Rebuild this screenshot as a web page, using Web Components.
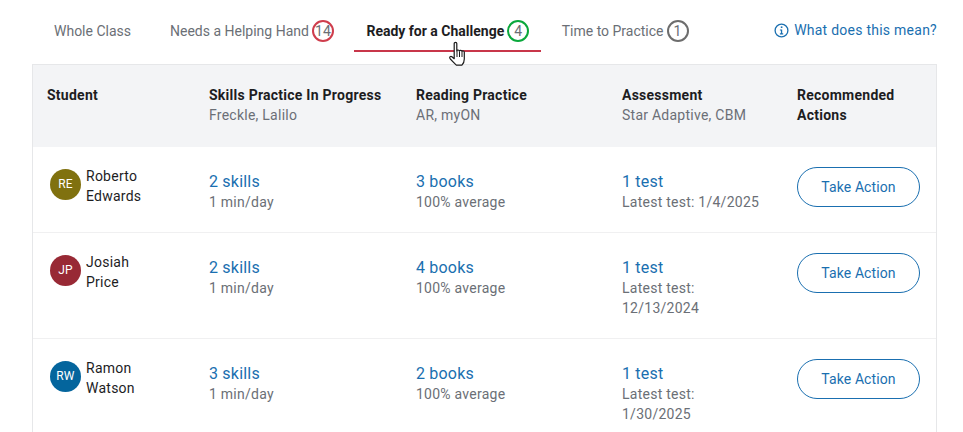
<!DOCTYPE html>
<html>
<head>
<meta charset="utf-8">
<title>Recommendations</title>
<style>
    html, body {
        margin: 0;
        padding: 0;
        height: 432px;
        overflow: hidden;
        background: #fff;
        font-family: Roboto, sans-serif;
    }
</style>
</head>
<body>
<group-view>
    <tab-bar slot="tabs">
        <tab-item>Whole Class</tab-item>
        <tab-item count="14" tone="red">Needs a Helping Hand</tab-item>
        <tab-item count="4" tone="green" active>Ready for a Challenge</tab-item>
        <tab-item count="1" tone="grey">Time to Practice</tab-item>
        <help-link slot="end">What does this mean?</help-link>
    </tab-bar>
    <student-table slot="table">
        <table-head></table-head>
        <student-row name="Roberto|Edwards" initials="RE" color="#80710f" skills="2 skills" books="3 books" tests="1 test" latest="Latest test: 1/4/2025"></student-row>
        <student-row name="Josiah|Price" initials="JP" color="#982935" skills="2 skills" books="4 books" tests="1 test" latest="Latest test: 12/13/2024" tall></student-row>
        <student-row name="Ramon|Watson" initials="RW" color="#04659d" skills="3 skills" books="2 books" tests="1 test" latest="Latest test: 1/30/2025" tall></student-row>
    </student-table>
    <hand-cursor slot="cursor"></hand-cursor>
</group-view>

<script>
const COLUMNS = "grid-template-columns: 162px 207px 206px 175px 1fr;";

class GroupView extends HTMLElement {
    constructor() {
        super();
        this.attachShadow({mode: "open"}).innerHTML = `
            <style>
                :host {
                    display: block;
                    position: relative;
                    padding: 12px 26px 0 32px;
                    color: #1d1d1f;
                }
            </style>
            <slot name="tabs"></slot>
            <slot name="table"></slot>
            <slot name="cursor"></slot>`;
    }
}

class TabBar extends HTMLElement {
    constructor() {
        super();
        this.attachShadow({mode: "open"}).innerHTML = `
            <style>
                :host {
                    display: flex;
                    align-items: flex-start;
                    height: 52px;
                    padding-left: 10px;
                }
                .tabs {
                    display: flex;
                    gap: 8.5px;
                    flex: 1;
                }
            </style>
            <div class="tabs"><slot></slot></div>
            <slot name="end"></slot>`;
    }
}

class TabItem extends HTMLElement {
    constructor() {
        super();
        const count = this.getAttribute("count");
        const colors = {red: "#cf3d4c", green: "#0aa83c", grey: "#6d6d6d"};
        const badge = count
            ? `<span class="badge" style="border-color:${colors[this.getAttribute("tone")]}">${count}</span>`
            : "";
        this.attachShadow({mode: "open"}).innerHTML = `
            <style>
                :host {
                    display: block;
                    box-sizing: border-box;
                    height: 40px;
                    padding: 8px 12px 0;
                    font-size: 14px;
                    line-height: 22px;
                    color: #6b6f76;
                    border-bottom: 2px solid transparent;
                }
                :host(:first-child) {
                    margin-right: 6.5px;
                }
                :host([active]) {
                    font-weight: 700;
                    color: #1d1d1f;
                    border-bottom-color: #c8364a;
                }
                .row {
                    display: flex;
                    align-items: center;
                    gap: 3px;
                }
                .badge {
                    box-sizing: border-box;
                    width: 22px;
                    height: 22px;
                    border: 2px solid;
                    border-radius: 50%;
                    font-weight: 400;
                    color: #6b6f76;
                    line-height: 18px;
                    text-align: center;
                }
            </style>
            <div class="row"><span><slot></slot></span>${badge}</div>`;
    }
}

class HelpLink extends HTMLElement {
    constructor() {
        super();
        this.attachShadow({mode: "open"}).innerHTML = `
            <style>
                :host {
                    display: flex;
                    align-items: center;
                    gap: 5px;
                    height: 36px;
                    font-size: 14px;
                    letter-spacing: 0.25px;
                    color: #1a6fb0;
                }
                svg { display: block; }
            </style>
            <svg width="15" height="15" viewBox="0 0 15 15" fill="none">
                <circle cx="7.5" cy="7.5" r="6.4" stroke="#1a6fb0" stroke-width="1.3"/>
                <rect x="6.8" y="3.4" width="1.6" height="1.6" fill="#1a6fb0"/>
                <path d="M5.9 6.4h2.3v3.9h1v1.1H5.9v-1.1h1V7.5h-1z" fill="#1a6fb0"/>
            </svg>
            <span><slot></slot></span>`;
    }
}

class StudentTable extends HTMLElement {
    constructor() {
        super();
        this.attachShadow({mode: "open"}).innerHTML = `
            <style>
                :host {
                    display: block;
                    box-sizing: border-box;
                    width: 905px;
                    border: 1px solid #e6e7e9;
                    border-bottom: 0;
                    background: #fff;
                }
            </style>
            <slot></slot>`;
    }
}

class TableHead extends HTMLElement {
    constructor() {
        super();
        this.attachShadow({mode: "open"}).innerHTML = `
            <style>
                :host {
                    display: grid;
                    ${COLUMNS}
                    box-sizing: border-box;
                    height: 82px;
                    padding: 20px 0 0 14px;
                    background: #f3f4f6;
                    font-size: 14px;
                    line-height: 20px;
                    letter-spacing: 0.25px;
                }
                b { display: block; font-weight: 700; color: #1d1d1f; }
                span { color: #6b6f76; }
            </style>
            <div><b>Student</b></div>
            <div><b>Skills Practice In Progress</b><span>Freckle, Lalilo</span></div>
            <div><b>Reading Practice</b><span>AR, myON</span></div>
            <div><b>Assessment</b><span>Star Adaptive, CBM</span></div>
            <div><b>Recommended<br>Actions</b></div>`;
    }
}

class StudentRow extends HTMLElement {
    constructor() {
        super();
        const get = (name) => this.getAttribute(name);
        const name = get("name").split("|");
        const metric = (link, note) => `
            <div class="metric"><a>${link}</a><p>${note}</p></div>`;
        this.attachShadow({mode: "open"}).innerHTML = `
            <style>
                :host {
                    display: grid;
                    ${COLUMNS}
                    box-sizing: border-box;
                    height: 85px;
                    padding: 20px 0 0 14px;
                    border-top: 1px solid #f0f0f1;
                    font-size: 14px;
                    line-height: 20px;
                    letter-spacing: 0.25px;
                }
                :host([tall]) {
                    height: 106px;
                }
                :host(:nth-child(2)) {
                    border-top: 0;
                }
                .student {
                    display: flex;
                    align-items: flex-start;
                    gap: 5px;
                    margin-top: -1px;
                    padding-left: 3px;
                    color: #1d1d1f;
                }
                .avatar {
                    width: 31px;
                    height: 31px;
                    margin-top: 3px;
                    border-radius: 50%;
                    background: ${get("color")};
                    color: #fff;
                    font-size: 12px;
                    font-weight: 400;
                    line-height: 31px;
                    text-align: center;
                }
                .metric { padding-top: 5px; }
                a {
                    display: block;
                    font-size: 16px;
                    line-height: 20px;
                    color: #1a6fb0;
                    letter-spacing: 0.2px;
                }
                p {
                    margin: 0;
                    color: #6b6f76;
                    width: 140px;
                }
                button {
                    display: block;
                    box-sizing: border-box;
                    width: 123px;
                    height: 40px;
                    border: 1px solid #1a6fb0;
                    border-radius: 20px;
                    background: #fff;
                    color: #1a6fb0;
                    font: 14px Roboto, sans-serif;
                    letter-spacing: 0.1px;
                }
            </style>
            <div class="student">
                <div class="avatar">${get("initials")}</div>
                <div>${name[0]}<br>${name[1]}</div>
            </div>
            ${metric(get("skills"), "1 min/day")}
            ${metric(get("books"), "100% average")}
            ${metric(get("tests"), get("latest"))}
            <div><button>Take Action</button></div>`;
    }
}

class HandCursor extends HTMLElement {
    constructor() {
        super();
        this.attachShadow({mode: "open"}).innerHTML = `
            <style>
                :host {
                    display: block;
                    position: absolute;
                    left: 449px;
                    top: 41px;
                    width: 20px;
                    height: 26px;
                }
            </style>
            <svg width="20" height="26" viewBox="0 0 20 26">
                <path d="M5.2 2.6c0-1.7 2.6-1.7 2.6 0v7.2c.2-1 2.4-1.2 2.6.3.3-1 2.4-1 2.6.4.5-.9 2.3-.6 2.3.8v6.6c0 2.6-1.4 5.2-2.4 6.3H7.4C6 22.8 1.6 18.6.9 17.2c-.6-1.3.8-2.4 2-1.5l2.3 2z" fill="#fff" stroke="#1a1a1a" stroke-width="1.2" stroke-linejoin="round"/>
                <path d="M8 10v6M10.5 10.5V16M13 11v5" stroke="#1a1a1a" stroke-width="1" fill="none"/>
            </svg>`;
    }
}

customElements.define("group-view", GroupView);
customElements.define("tab-bar", TabBar);
customElements.define("tab-item", TabItem);
customElements.define("help-link", HelpLink);
customElements.define("student-table", StudentTable);
customElements.define("table-head", TableHead);
customElements.define("student-row", StudentRow);
customElements.define("hand-cursor", HandCursor);
</script>
</body>
</html>
